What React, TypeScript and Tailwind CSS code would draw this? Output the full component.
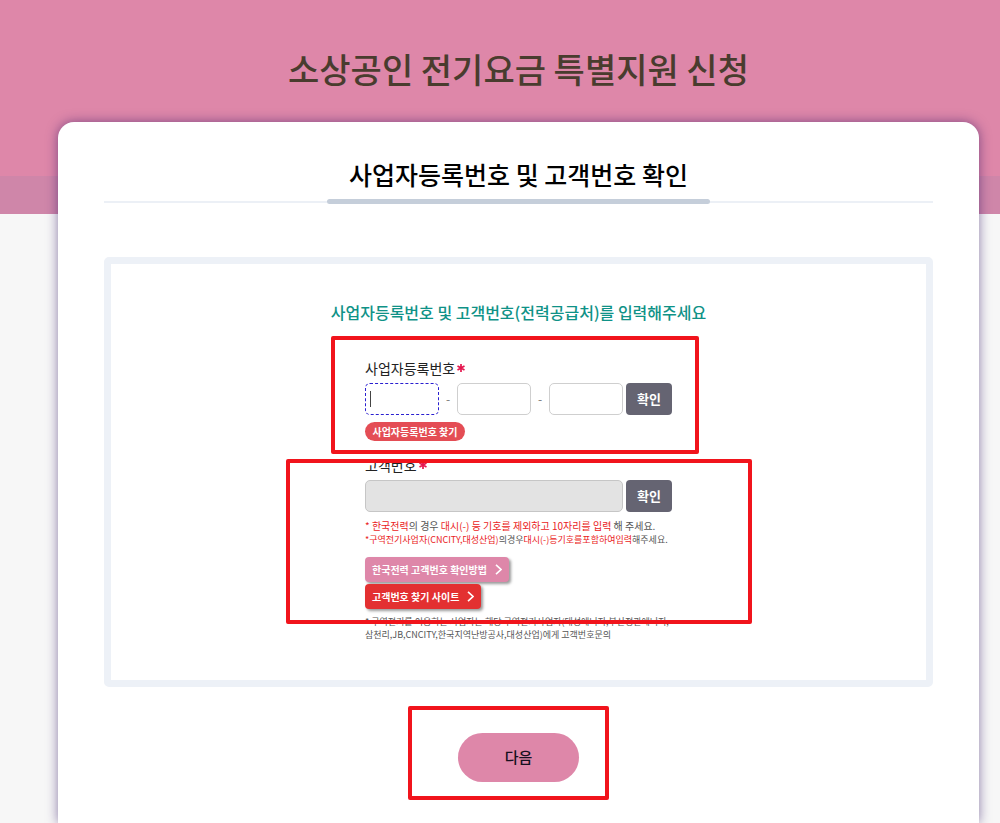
import React from "react";

function Highlight({ className }: { className: string }) {
  return (
    <div
      aria-hidden="true"
      className={`pointer-events-none absolute z-10 rounded-[2px] border-4 border-[#f1141c] ${className}`}
    />
  );
}

function Required() {
  return (
    <svg aria-hidden="true" viewBox="0 0 8 8" className="size-2 text-[#e5174f]" stroke="currentColor" strokeWidth="1.7">
      <path d="M4 0v8M0.5 2l7 4M0.5 6l7-4" />
    </svg>
  );
}

function ConfirmButton() {
  return (
    <button
      type="button"
      className="h-8 w-[46px] shrink-0 rounded-[4px] bg-[#656472] text-[13px] font-bold text-white"
    >
      확인
    </button>
  );
}

function HelpButton({ children, className }: { children: React.ReactNode; className: string }) {
  return (
    <button
      type="button"
      className={`flex h-[25px] items-center gap-2 rounded-[4px] px-[7px] text-[10px] font-bold text-white shadow-[2px_2px_3px_rgba(0,0,0,0.4)] ${className}`}
    >
      {children}
      <svg aria-hidden="true" viewBox="0 0 7 11" className="h-[11px] w-[7px]" fill="none" stroke="currentColor" strokeWidth="1.6">
        <path d="M1 0.8 6 5.5 1 10.2" />
      </svg>
    </button>
  );
}

function Red({ children }: { children: React.ReactNode }) {
  return <span className="text-[#ea1c24]">{children}</span>;
}

const numberInput =
  "h-8 w-full min-w-0 rounded-[5px] border border-[#cfcfcf] bg-white px-1 text-sm outline-none";

export default function App() {
  return (
    <main className="flex min-h-screen flex-col overflow-hidden bg-[linear-gradient(#de87a9_0_176px,#cf86a9_176px_214px,#f7f7f7_214px)] pr-[21px] pl-[58px] font-['Noto_Sans_CJK_KR',sans-serif] text-[#222]">
      <h1 className="mt-[45px] text-center text-[34px] leading-[48px] font-medium text-[#493c2e]">
        소상공인 전기요금 특별지원 신청
      </h1>

      <div className="mt-[29px] flex-1 rounded-t-[16px] bg-white px-[46px] pt-9 shadow-[0_0_12px_rgba(50,20,100,0.55)]">
        <h2 className="text-center text-[25px] leading-8 font-medium text-black">
          사업자등록번호 및 고객번호 확인
        </h2>
        <div className="mt-[9px] flex items-center">
          <div className="h-[2px] flex-1 bg-[#ecf0f6]" />
          <div className="h-[5px] w-[383px] rounded-full bg-[#c5ceda]" />
          <div className="h-[2px] flex-1 bg-[#ecf0f6]" />
        </div>

        <form className="mt-[53px]" onSubmit={(e) => e.preventDefault()}>
          <div className="rounded-[5px] border-[7px] border-[#edf1f7] pt-9 pb-[39px]">
            <p className="text-center text-base leading-6 font-medium text-[#0f9287]">
              사업자등록번호 및 고객번호(전력공급처)를 입력해주세요
            </p>

            <div className="mx-auto mt-[34px] w-[307px]">
              <div className="relative">
                <Highlight className="-top-[22px] -right-[27px] -bottom-[13px] -left-[34px]" />
                <label htmlFor="biz1" className="flex items-center gap-[2px] text-sm leading-5">
                  사업자등록번호
                  <Required />
                </label>
                <div className="mt-[5px] flex items-center text-xs text-[#777]">
                  <div className="relative flex-1">
                    <input
                      id="biz1"
                      className="h-8 w-full min-w-0 rounded-[5px] border border-dashed border-[#2a1fd0] bg-white px-1 text-sm caret-transparent outline-none"
                    />
                    <span aria-hidden="true" className="absolute top-2 left-[5px] h-4 w-px bg-[#444]" />
                  </div>
                  <span className="w-[18px] text-center">-</span>
                  <div className="flex-1">
                    <input aria-label="사업자등록번호 가운데 자리" className={numberInput} />
                  </div>
                  <span className="w-[18px] text-center">-</span>
                  <div className="mr-[3px] flex-1">
                    <input aria-label="사업자등록번호 끝자리" className={numberInput} />
                  </div>
                  <ConfirmButton />
                </div>
                <button
                  type="button"
                  className="mt-[7px] flex h-[19px] w-[100px] items-center justify-center rounded-full bg-[#e44d55] text-[10px] font-bold text-white"
                >
                  사업자등록번호 찾기
                </button>
              </div>

              <div className="relative mt-[14px]">
                <Highlight className="top-1 -right-[80px] bottom-[17px] -left-[79px]" />
                <label htmlFor="customer" className="flex items-center gap-[2px] text-sm leading-5">
                  고객번호
                  <Required />
                </label>
                <div className="mt-[5px] flex gap-[3px]">
                  <input
                    id="customer"
                    disabled
                    className="h-8 min-w-0 flex-1 rounded-[5px] border border-[#c6c6c6] bg-[#e3e3e3] px-2 text-sm"
                  />
                  <ConfirmButton />
                </div>
                <p className="mt-[7px] text-[10px] leading-[14px] whitespace-nowrap text-[#555]">
                  <Red>* 한국전력</Red>의 경우 <Red>대시(-) 등 기호를 제외하고 10자리를 입력</Red> 해 주세요.
                </p>
                <p className="text-[9px] leading-[14px] whitespace-nowrap text-[#555]">
                  <Red>*구역전기사업자(CNCITY,대성산업)</Red>의경우<Red>대시(-)등기호를포함하여입력</Red>해주세요.
                </p>
                <div className="mt-[10px] flex flex-col items-start gap-[2px]">
                  <HelpButton className="bg-[#de87a9]">한국전력 고객번호 확인방법</HelpButton>
                  <HelpButton className="bg-[#e33031]">고객번호 찾기 사이트</HelpButton>
                </div>
                <p className="mt-[6px] text-[9px] leading-[13px] whitespace-nowrap text-[#555]">
                  * 구역전기를 이용하는 사업자는 해당 구역전기사업자(대성에너지,부산정관에너지,
                  <br />
                  삼천리,JB,CNCITY,한국지역난방공사,대성산업)에게 고객번호문의
                </p>
              </div>
            </div>
          </div>

          <div className="relative mx-auto mt-[46px] w-[121px]">
            <Highlight className="-top-[27px] -right-[30px] -bottom-[18px] -left-[50px]" />
            <button
              type="submit"
              className="h-[49px] w-full rounded-full bg-[#de87a9] text-[15px] font-medium text-[#161020]"
            >
              다음
            </button>
          </div>
        </form>
      </div>
    </main>
  );
}
